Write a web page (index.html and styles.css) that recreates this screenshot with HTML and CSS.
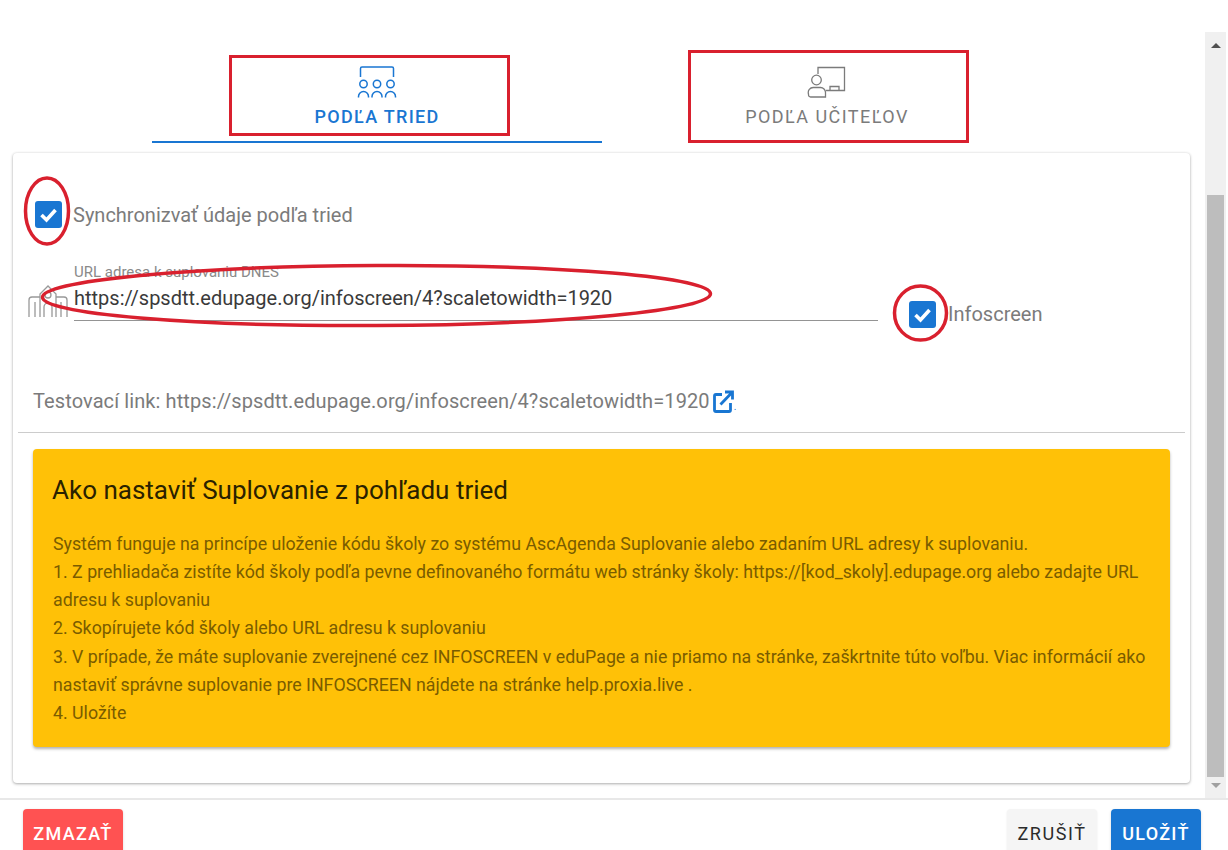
FILE: index.html
```html
<!DOCTYPE html>
<html lang="sk">
<head>
<meta charset="utf-8">
<title>Suplovanie</title>
<link rel="stylesheet" href="styles.css">
</head>
<body>
<div class="app">
  <div class="body">
    <main class="content">
      <div class="tabs">
        <div class="tab tab-active">
          <svg class="tab-icon" width="40" height="32" viewBox="0 0 40 32" fill="none" stroke="currentColor" stroke-width="1.500">
            <path d="M3.500 11V2.500a1.500 1.500 0 0 1 1.500-1.500h30a1.500 1.500 0 0 1 1.500 1.500V11"/>
            <circle cx="6.500" cy="18" r="3.700"/><circle cx="20" cy="18" r="3.700"/><circle cx="33.500" cy="18" r="3.700"/>
            <path d="M1.500 31.500v-1a5 5 0 0 1 10 0v1M15 31.500v-1a5 5 0 0 1 10 0v1M28.500 31.500v-1a5 5 0 0 1 10 0v1"/>
          </svg>
          <span>PODĽA TRIED</span>
        </div>
        <div class="tab tab-idle">
          <svg class="tab-icon" width="40" height="32" viewBox="0 0 40 32" fill="none" stroke="currentColor" stroke-width="1.300">
            <path d="M11 8V1.500h26.500v23H19"/>
            <path d="M23 24v-3.500h9V24"/>
            <circle cx="9.500" cy="14" r="4.800"/>
            <path d="M1.500 28a5 5 0 0 1 5-6.500h7a5 5 0 0 1 5 5V31h-15a2 2 0 0 1-2-2z"/>
          </svg>
          <span>PODĽA UČITEĽOV</span>
        </div>
      </div>
      <section class="card">
        <div class="check-row check-top">
          <svg class="check" viewBox="0 0 27 27"><rect width="27" height="27" rx="3"/><path d="M6.500 14l5 5 9-10"/></svg>
          <span class="check-label">Synchronizvať údaje podľa tried</span>
        </div>
        <div class="field-row">
          <svg class="field-icon" width="40" height="34" viewBox="0 0 40 34" fill="none" stroke="#999" stroke-width="1.300">
            <path d="M1 33V16a3 3 0 0 1 3-3h8M7 33V18M33 33V18M39 33V16a3 3 0 0 0-3-3h-8"/>
            <path d="M12 33V10l8-8 8 8v23M16 33V23a4 4 0 0 1 8 0v10"/>
            <circle cx="20" cy="11" r="3"/>
          </svg>
          <div class="field">
            <label class="field-label">URL adresa k suplovaniu DNES</label>
            <div class="field-value">https://spsdtt.edupage.org/infoscreen/4?scaletowidth=1920</div>
          </div>
          <div class="check-row check-info">
            <svg class="check" viewBox="0 0 27 27"><rect width="27" height="27" rx="3"/><path d="M6.500 14l5 5 9-10"/></svg>
            <span class="check-label">Infoscreen</span>
          </div>
        </div>
        <div class="test-link">
          <span>Testovací link: https://spsdtt.edupage.org/infoscreen/4?scaletowidth=1920</span>
          <svg class="link-icon" width="21" height="23" viewBox="0 0 21 23" fill="none" stroke="#1976d2" stroke-width="2.800">
            <path d="M9 4.500H3a1.500 1.500 0 0 0-1.500 1.500v14A1.500 1.500 0 0 0 3 21.500h13a1.500 1.500 0 0 0 1.500-1.500v-7"/>
            <path d="M7.500 14.500L18.500 3M12 2h7.500v7.500"/>
          </svg>
          <span class="dot">.</span>
        </div>
        <hr class="divider">
        <div class="alert">
          <h2 class="alert-title">Ako nastaviť Suplovanie z pohľadu tried</h2>
          <p class="alert-text">Systém funguje na princípe uloženie kódu školy zo systému AscAgenda Suplovanie alebo zadaním URL adresy k suplovaniu.<br>
          1. Z prehliadača zistíte kód školy podľa pevne definovaného formátu web stránky školy: https://[kod_skoly].edupage.org alebo zadajte URL adresu k suplovaniu<br>
          2. Skopírujete kód školy alebo URL adresu k suplovaniu<br>
          3. V prípade, že máte suplovanie zverejnené cez INFOSCREEN v eduPage a nie priamo na stránke, zaškrtnite túto voľbu. Viac informácií ako nastaviť správne suplovanie pre INFOSCREEN nájdete na stránke help.proxia.live .<br>
          4. Uložíte</p>
        </div>
      </section>
    </main>
    <div class="scrollbar">
      <span class="arrow arrow-up"></span>
      <span class="thumb"></span>
      <span class="arrow arrow-down"></span>
    </div>
  </div>
  <footer class="footer">
    <button class="btn btn-red">ZMAZAŤ</button>
    <span class="footer-space"></span>
    <button class="btn btn-light">ZRUŠIŤ</button>
    <button class="btn btn-blue">ULOŽIŤ</button>
  </footer>
</div>
<svg class="marks" width="1228" height="850" viewBox="0 0 1228 850" fill="none" stroke="#d9202e" stroke-width="3">
  <rect x="230.500" y="56.500" width="278" height="78"/>
  <rect x="689.500" y="51.500" width="278" height="90"/>
  <ellipse class="mark-oval" cx="47" cy="211" rx="21.500" ry="33"/>
  <ellipse class="mark-oval" cx="376.500" cy="295.500" rx="334" ry="30" transform="rotate(-0.300 376 295)"/>
  <ellipse class="mark-oval" cx="920.500" cy="313" rx="26" ry="27"/>
</svg>
</body>
</html>
```
FILE: styles.css
```css
* { box-sizing: border-box; }
html, body { margin: 0; height: 850px; overflow: hidden; background: #fff; }
body { font-family: Roboto, "Liberation Sans", sans-serif; position: relative; }
.app { height: 850px; display: flex; flex-direction: column; padding-top: 32px; }
.body { display: flex; height: 766px; flex: none; padding-right: 2px; }
.content { flex: 1; min-width: 0; overflow: hidden; }
.tabs { display: flex; margin: 0 0 10px 152px; }
.tab { width: 450px; height: 111px; display: flex; flex-direction: column; align-items: center; padding-top: 34px; font-size: 18px; }
.tab-active { color: #1976d2; font-weight: 500; letter-spacing: 1.300px; border-bottom: 2px solid #1976d2; }
.tab-idle { color: #7b7b7b; letter-spacing: 1.450px; }
.tab-icon { display: block; margin-bottom: 8px; }
.tab-active .tab-icon { margin-left: -1px; }
.card { margin-left: 13px; width: 1177px; height: 630px; background: #fff; border-radius: 4px; box-shadow: 0 1px 3px rgba(0,0,0,.3), 0 0 3px rgba(0,0,0,.08); padding: 0 5px; }
.check-row { display: flex; align-items: center; }
.check { width: 27px; height: 27px; flex: none; }
.check rect { fill: #1976d2; }
.check path { fill: none; stroke: #fff; stroke-width: 3.600; }
.check-label { color: #7b7b7b; font-size: 20px; margin-left: 11px; }
.check-top { padding: 48px 0 0 17px; height: 75px; }
.field-row { display: flex; margin-top: 36px; height: 74px; }
.field-icon { margin: 20px 0 0 10px; flex: none; }
.field { width: 804px; margin-left: 6px; height: 57px; border-bottom: 1px solid #949494; }
.field-label { display: block; font-size: 15px; color: #8a8a8a; line-height: 16px; margin-top: 0; }
.field-value { font-size: 20px; color: #3a3a3a; line-height: 26px; margin-top: 5px; }
.check-info { margin-left: 31px; padding-top: 18px; align-self: flex-start; height: 82px; }
.check-info .check-label { margin-left: 12px; }
.test-link { display: flex; align-items: center; margin-top: 48px; padding-left: 15px; height: 30px; color: #7b7b7b; font-size: 20px; letter-spacing: .1px; }
.link-icon { margin-left: 3px; flex: none; }
.dot { font-size: 10px; color: #1976d2; align-self: flex-end; margin-bottom: 4px; }
.divider { margin: 16px 0; border: 0; border-top: 1px solid #ccc; }
.alert { margin: 0 15px; height: 298px; background: #ffc107; border-radius: 4px; box-shadow: 0 2px 3px rgba(0,0,0,.3); padding: 24px 19px; }
.alert-title { margin: 0; font-size: 26px; font-weight: 400; line-height: 34px; color: #2a2100; }
.alert-text { margin: 23px 0 0 1px; font-size: 17.770px; line-height: 28.150px; color: #7a5c00; }
.scrollbar { width: 21px; flex: none; background: #f0f0f0; display: flex; flex-direction: column; align-items: center; padding-top: 11px; }
.arrow { width: 0; height: 0; border-left: 5px solid transparent; border-right: 5px solid transparent; flex: none; }
.arrow-up { border-bottom: 5px solid #505050; }
.thumb { width: 17px; height: 582px; background: #bdbdbd; margin-top: 147px; flex: none; }
.arrow-down { border-top: 5px solid #a0a0a0; margin-top: 6px; }
.footer { flex: none; height: 52px; border-top: 2px solid #e8e8e8; display: flex; padding: 9px 27px 0 23px; gap: 14px; overflow: hidden; }
.footer-space { flex: 1; }
.btn { width: 100px; height: 46px; flex: none; border: 0; border-radius: 4px; font-family: inherit; font-size: 18px; font-weight: 500; letter-spacing: 1.300px; padding: 2px 0 0; }
.btn-red { background: #ff5252; color: #fff; box-shadow: 0 1px 3px rgba(0,0,0,.15); }
.btn-light { background: #f5f5f5; color: #2b2b2b; width: 90px; font-weight: 400; letter-spacing: 1.600px; box-shadow: 0 1px 2px rgba(0,0,0,.1); }
.btn-blue { background: #1976d2; color: #fff; width: 90px; box-shadow: 0 1px 3px rgba(0,0,0,.15); }
.marks { position: absolute; left: 0; top: 0; pointer-events: none; }
.mark-oval { stroke-width: 3.500; }
```
